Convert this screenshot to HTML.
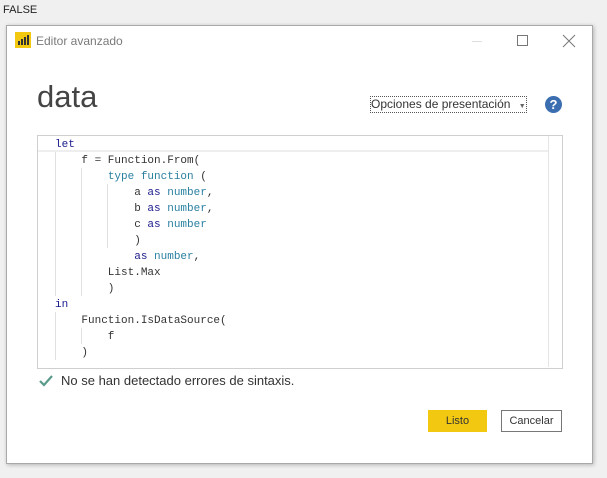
<!DOCTYPE html><html><head><style>
body{margin:0;width:607px;height:478px;background:#f0f0f0;position:relative;overflow:hidden;font-family:"Liberation Sans",sans-serif}
.a{position:absolute}
.dlg{left:6px;top:25px;width:585px;height:437px;background:#fff;border:1px solid #a9a9a9;box-shadow:1px 1px 4px rgba(0,0,0,.25)}
.code{left:37px;top:135px;width:524px;height:232px;border:1px solid #cfcfcf;background:#fff}
.ln{position:absolute;font-family:"Liberation Mono",monospace;font-size:11px;color:#333;white-space:pre;line-height:16px}
.k{color:#1a1a8c}.t{color:#2a7fa0}
.g{position:absolute;width:1px;background:#e0e0e0}
</style></head><body>
<div class="a" style="left:3px;top:4px;font-size:11px;color:#222">FALSE</div>
<div class="a dlg"></div>
<div class="a" style="left:15px;top:32px;width:16px;height:16px;background:#f2c811"></div>
<svg class="a" style="left:15px;top:32px" width="16" height="16"><rect x="3" y="9" width="2" height="4" fill="#333"/><rect x="6" y="7" width="2" height="6" fill="#333"/><rect x="9" y="5" width="2" height="8" fill="#333"/><rect x="12" y="3" width="2" height="10" fill="#333"/></svg>
<div class="a" style="left:36px;top:34px;font-size:12px;color:#7a7a7a">Editor avanzado</div>
<div class="a" style="left:472px;top:41px;width:10px;height:1px;background:#ddd"></div>
<div class="a" style="left:517px;top:35px;width:9px;height:9px;border:1px solid #777"></div>
<svg class="a" style="left:562px;top:34px" width="14" height="14"><path d="M1 1L13 13M13 1L1 13" stroke="#777" stroke-width="1"/></svg>
<div class="a" style="left:37px;top:79px;font-size:31px;color:#444;font-weight:300">data</div>
<div class="a" style="left:370px;top:96px;width:155px;height:15px;border:1px dotted #555;font-size:12px;color:#333;line-height:15px">Opciones de presentación <span style="font-size:7px;color:#666;margin-left:5px">▼</span></div>
<div class="a" style="left:545px;top:96px;width:17px;height:17px;border-radius:50%;background:#3b6eb0;color:#fff;font-weight:bold;font-size:13px;text-align:center;line-height:17px">?</div>
<div class="a code"></div>
<div class="a" style="left:38px;top:136px;width:510px;height:14px;border-bottom:2px solid #eee"></div>
<div class="a" style="left:548px;top:136px;width:1px;height:231px;background:#e5e5e5"></div>
<div class="g" style="left:55px;top:152px;height:144px"></div>
<div class="g" style="left:81px;top:168px;height:128px"></div>
<div class="g" style="left:107px;top:184px;height:64px"></div>
<div class="g" style="left:55px;top:312px;height:48px"></div>
<div class="g" style="left:81px;top:328px;height:16px"></div>
<div class="ln" style="left:55px;top:137px"><span class="k">let</span>
    f = Function.From(
        <span class="t">type function</span> (
            a <span class="k">as</span> <span class="t">number</span>,
            b <span class="k">as</span> <span class="t">number</span>,
            c <span class="k">as</span> <span class="t">number</span>
            )
            <span class="k">as</span> <span class="t">number</span>,
        List.Max
        )
<span class="k">in</span>
    Function.IsDataSource(
        f
    )</div>
<svg class="a" style="left:38px;top:374px" width="16" height="14"><path d="M2 7L6 11L14 2" stroke="#5a9a8a" stroke-width="2.2" fill="none"/></svg>
<div class="a" style="left:61px;top:373px;font-size:13px;color:#333">No se han detectado errores de sintaxis.</div>
<div class="a" style="left:428px;top:410px;width:59px;height:22px;background:#f2c811;font-size:11px;color:#333;text-align:center;line-height:22px">Listo</div>
<div class="a" style="left:501px;top:410px;width:59px;height:20px;border:1px solid #777;font-size:11px;color:#333;text-align:center;line-height:20px;background:#fff">Cancelar</div>
</body></html>
